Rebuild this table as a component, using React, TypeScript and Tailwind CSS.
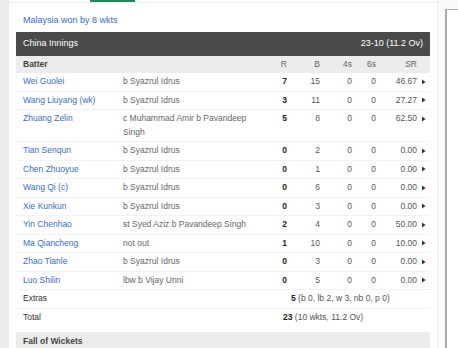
import React from "react";

type Bat = { name: string; how: string; r: string; b: string; f: string; s: string; sr: string };

const rows: Bat[] = [
  { name: "Wei Guolei", how: "b Syazrul Idrus", r: "7", b: "15", f: "0", s: "0", sr: "46.67" },
  { name: "Wang Liuyang (wk)", how: "b Syazrul Idrus", r: "3", b: "11", f: "0", s: "0", sr: "27.27" },
  { name: "Zhuang Zelin", how: "c Muhammad Amir b Pavandeep Singh", r: "5", b: "8", f: "0", s: "0", sr: "62.50" },
  { name: "Tian Senqun", how: "b Syazrul Idrus", r: "0", b: "2", f: "0", s: "0", sr: "0.00" },
  { name: "Chen Zhuoyue", how: "b Syazrul Idrus", r: "0", b: "1", f: "0", s: "0", sr: "0.00" },
  { name: "Wang Qi (c)", how: "b Syazrul Idrus", r: "0", b: "6", f: "0", s: "0", sr: "0.00" },
  { name: "Xie Kunkun", how: "b Syazrul Idrus", r: "0", b: "3", f: "0", s: "0", sr: "0.00" },
  { name: "Yin Chenhao", how: "st Syed Aziz b Pavandeep Singh", r: "2", b: "4", f: "0", s: "0", sr: "50.00" },
  { name: "Ma Qiancheng", how: "not out", r: "1", b: "10", f: "0", s: "0", sr: "10.00" },
  { name: "Zhao Tianle", how: "b Syazrul Idrus", r: "0", b: "3", f: "0", s: "0", sr: "0.00" },
  { name: "Luo Shilin", how: "lbw b Vijay Unni", r: "0", b: "5", f: "0", s: "0", sr: "0.00" },
];

const grid = "grid grid-cols-[107px_148px_16px_33px_32px_24px_41px_15px]";

function Arrow() {
  return (
    <svg width="4" height="6" viewBox="0 0 4 6" className="ml-[5px]">
      <path d="M0 0.5 L3.6 3 L0 5.5 Z" fill="#333" />
    </svg>
  );
}

export default function App() {
  return (
    <div className="w-[458px] h-[348px] overflow-hidden bg-[#ebebeb] flex font-['Liberation_Sans',Arial,sans-serif]">
      <div className="w-[9px] shrink-0" />
      <div className="w-[429px] shrink-0 bg-white border-r border-[#eeeeee] flex flex-col">
        <div className="h-[3px] border-b border-[#eeeeee] flex">
          <div className="ml-[81px] w-[45px] h-[2px] bg-[#1b8a5a]" />
        </div>
        <div className="px-[7px]">
          <div className="mt-[11px] mb-[6px] pl-[7px] text-[9px] leading-[12px] text-[#3b6dc1]">
            Malaysia won by 8 wkts
          </div>
          <div className="h-[24px] bg-[#4a4a4a] flex items-center justify-between px-[7px] text-[9px] text-white">
            <span>China Innings</span>
            <span>23-10 (11.2 Ov)</span>
          </div>
          <div className={`${grid} bg-[#ececec] text-[8.5px] leading-[13px] py-[2px] items-center`}>
            <div className="pl-[7px] font-semibold text-[#444]">Batter</div>
            <div />
            <div className="text-right text-[#666]">R</div>
            <div className="text-right text-[#666]">B</div>
            <div className="text-right text-[#666]">4s</div>
            <div className="text-right text-[#666]">6s</div>
            <div className="text-right text-[#666]">SR</div>
            <div />
          </div>
          {rows.map((r) => (
            <div
              key={r.name}
              className={`${grid} text-[8.5px] leading-[13.5px] py-[2px] border-b border-[#f2f2f2] items-start`}
            >
              <div className="pl-[7px] text-[#3b6dc1] whitespace-nowrap">{r.name}</div>
              <div className="pr-[12px] text-[#666]">{r.how}</div>
              <div className="text-right font-bold text-[#222]">{r.r}</div>
              <div className="text-right text-[#555]">{r.b}</div>
              <div className="text-right text-[#555]">{r.f}</div>
              <div className="text-right text-[#555]">{r.s}</div>
              <div className="text-right text-[#555]">{r.sr}</div>
              <div className="flex items-center h-[13.5px]">
                <Arrow />
              </div>
            </div>
          ))}
          <div className="flex text-[8.5px] leading-[13.5px] py-[2px] border-b border-[#f2f2f2]">
            <div className="w-[275px] shrink-0 pl-[7px] text-[#333]">Extras</div>
            <div className="text-[#555]">
              <span className="font-bold text-[#222]">5</span> (b 0, lb 2, w 3, nb 0, p 0)
            </div>
          </div>
          <div className="flex text-[8.5px] leading-[13.5px] py-[2px]">
            <div className="w-[267px] shrink-0 pl-[7px] text-[#333]">Total</div>
            <div className="text-[#555]">
              <span className="font-bold text-[#222]">23</span> (10 wkts, 11.2 Ov)
            </div>
          </div>
          <div className="mt-[6px] bg-[#ececec] h-[20px] flex items-start pt-[3px] pl-[7px] text-[8.5px] leading-[13px] font-semibold text-[#444]">
            Fall of Wickets
          </div>
        </div>
      </div>
      <div className="w-[7px] shrink-0 bg-[#fafafa]" />
      <div className="flex-1 bg-[#fafafa] pt-[9px]">
        <div className="h-full border-l-2 border-t border-[#aaaaaa] bg-white" />
      </div>
    </div>
  );
}
